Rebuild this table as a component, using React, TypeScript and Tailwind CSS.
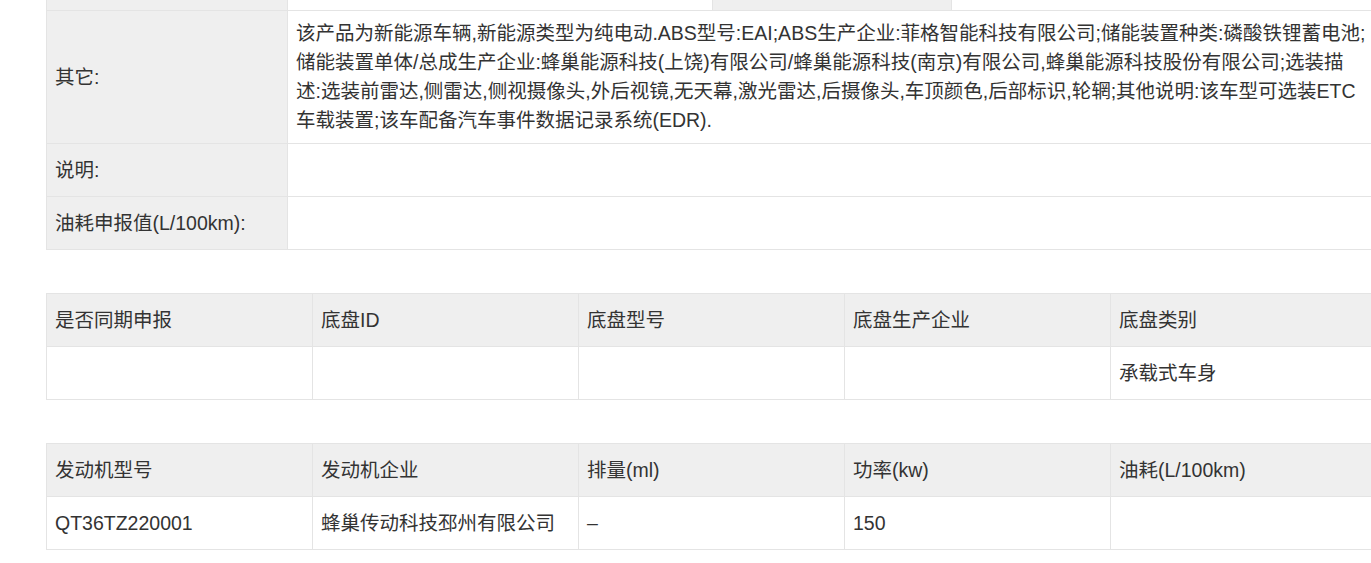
import React from "react";

const font = { fontFamily: '"Liberation Sans", "Noto Sans CJK SC", sans-serif' };

const lines = [
  "该产品为新能源车辆,新能源类型为纯电动.ABS型号:EAI;ABS生产企业:菲格智能科技有限公司;储能装置种类:磷酸铁锂蓄电池;",
  "储能装置单体/总成生产企业:蜂巢能源科技(上饶)有限公司/蜂巢能源科技(南京)有限公司,蜂巢能源科技股份有限公司;选装描",
  "述:选装前雷达,侧雷达,侧视摄像头,外后视镜,无天幕,激光雷达,后摄像头,车顶颜色,后部标识,轮辋;其他说明:该车型可选装ETC",
  "车载装置;该车配备汽车事件数据记录系统(EDR).",
];

function GridTable({ head, body }: { head: string[]; body: string[] }) {
  return (
    <table className="table-fixed border-collapse w-[1330px] mb-[43px]">
      <tbody>
        <tr>
          {head.map((h, i) => (
            <td key={i} className="w-[266px] h-[53px] border border-[#e4e4e4] bg-[#efefef] px-[8px] align-middle">
              {h}
            </td>
          ))}
        </tr>
        <tr>
          {body.map((b, i) => (
            <td key={i} className="w-[266px] h-[53px] border border-[#e4e4e4] bg-white px-[8px] align-middle">
              {b}
            </td>
          ))}
        </tr>
      </tbody>
    </table>
  );
}

export default function App() {
  return (
    <div className="w-[1371px] h-[563px] overflow-hidden bg-white text-[#333] text-[19.5px] leading-[29px]" style={font}>
      <div className="ml-[46px] mt-[-43px]">
        <table className="table-fixed border-collapse w-[1330px] mb-[43px]">
          <colgroup>
            <col className="w-[241px]" />
            <col className="w-[425px]" />
            <col className="w-[239px]" />
            <col className="w-[425px]" />
          </colgroup>
          <tbody>
            <tr>
              <td className="h-[53px] border border-[#e4e4e4] bg-[#efefef]"></td>
              <td className="h-[53px] border border-[#e4e4e4] bg-white"></td>
              <td className="h-[53px] border border-[#e4e4e4] bg-[#efefef]"></td>
              <td className="h-[53px] border border-[#e4e4e4] bg-white"></td>
            </tr>
            <tr>
              <td className="border border-[#e4e4e4] bg-[#efefef] px-[8px] align-middle">其它:</td>
              <td colSpan={3} className="border border-[#e4e4e4] bg-white pl-[8px] pr-0 py-[8px] align-middle">
                {lines.map((l, i) => (
                  <div key={i} className="whitespace-nowrap">{l}</div>
                ))}
              </td>
            </tr>
            <tr>
              <td className="h-[53px] border border-[#e4e4e4] bg-[#efefef] px-[8px] align-middle">说明:</td>
              <td colSpan={3} className="h-[53px] border border-[#e4e4e4] bg-white"></td>
            </tr>
            <tr>
              <td className="h-[53px] border border-[#e4e4e4] bg-[#efefef] px-[8px] align-middle whitespace-nowrap">油耗申报值(L/100km):</td>
              <td colSpan={3} className="h-[53px] border border-[#e4e4e4] bg-white"></td>
            </tr>
          </tbody>
        </table>
        <GridTable
          head={["是否同期申报", "底盘ID", "底盘型号", "底盘生产企业", "底盘类别"]}
          body={["", "", "", "", "承载式车身"]}
        />
        <GridTable
          head={["发动机型号", "发动机企业", "排量(ml)", "功率(kw)", "油耗(L/100km)"]}
          body={["QT36TZ220001", "蜂巢传动科技邳州有限公司", "–", "150", ""]}
        />
      </div>
    </div>
  );
}
